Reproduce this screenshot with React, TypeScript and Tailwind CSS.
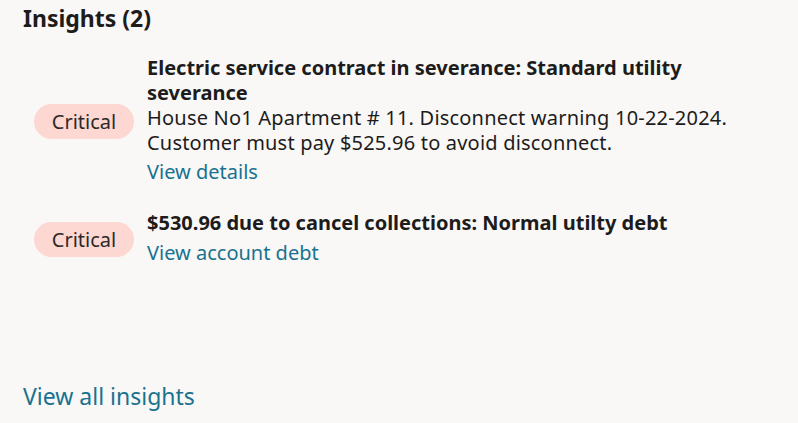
import React from "react";

const font = { fontFamily: '"Noto Sans", "Open Sans", sans-serif' };

function Badge() {
  return (
    <div className="flex h-[35px] w-[100px] shrink-0 items-center justify-center rounded-full bg-[#fdd7d2] text-[20px] text-[#2b2a28]">
      Critical
    </div>
  );
}

export default function App() {
  return (
    <div className="flex h-[423px] w-[798px] flex-col bg-[#f9f8f7] text-[#1d1c1b]" style={font}>
      <h1 className="pl-[23px] pt-[3px] text-[23px] font-bold leading-[30px]">Insights (2)</h1>
      <div className="mt-[22px] flex flex-col gap-[22px] pl-[34px]">
        <div className="flex items-center gap-[13px]">
          <Badge />
          <div className="flex flex-col pb-[4px] text-[20px]">
            <div className="font-bold leading-[25px]">Electric service contract in severance: Standard utility<br />severance</div>
            <div className="leading-[25px] tracking-[0.2px]">House No1 Apartment # 11. Disconnect warning 10-22-2024.<br />Customer must pay $525.96 to avoid disconnect.</div>
            <a className="mt-[4px] leading-[25px] text-[#19728f]">View details</a>
          </div>
        </div>
        <div className="flex items-center gap-[13px]">
          <Badge />
          <div className="flex flex-col pb-[4px] text-[20px]">
            <div className="font-bold leading-[25px]">$530.96 due to cancel collections: Normal utilty debt</div>
            <a className="mt-[5px] leading-[25px] text-[#19728f]">View account debt</a>
          </div>
        </div>
      </div>
      <div className="mt-auto pb-[12px] pl-[23px]">
        <a className="text-[23px] leading-[30px] text-[#19728f]">View all insights</a>
      </div>
    </div>
  );
}
